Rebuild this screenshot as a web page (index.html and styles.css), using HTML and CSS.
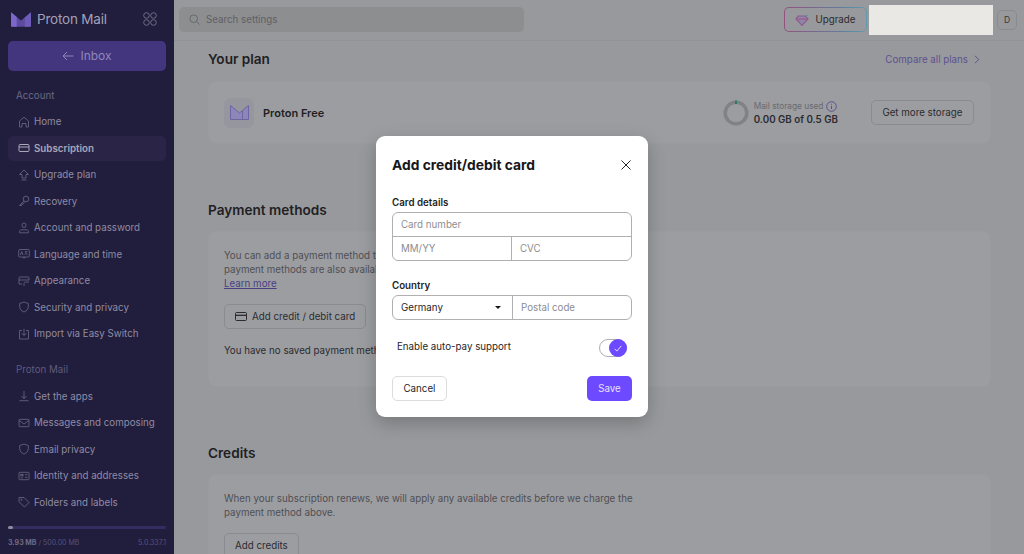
FILE: index.html
```html
<!DOCTYPE html>
<html lang="en">
<head>
  <meta charset="UTF-8">
  <title>Proton Mail settings</title>
  <link rel="stylesheet" href="styles.css">
</head>
<body>
<div class="app">
  <aside class="sidebar">
    <div class="brand">
      <svg class="brand-logo" width="20" height="15" viewBox="0 0 21 15"><path d="M0 0l10.5 8.5L21 0v15H0z" fill="#5c4b9e"/><path d="M0 0l6 5v10H1.5A1.5 1.5 0 0 1 0 13.500z" fill="#7d68c9"/><path d="M21 0l-6.500 5.300V15h5A1.500 1.500 0 0 0 21 13.500z" fill="#6f5bb8"/></svg>
      <span class="brand-name">Proton Mail</span>
      <svg class="brand-grid" width="14" height="14" viewBox="0 0 14 14" fill="none" stroke="#6f6c86" stroke-width="1"><circle cx="3.500" cy="3.500" r="2.800"/><circle cx="10.500" cy="3.500" r="2.800"/><circle cx="3.500" cy="10.500" r="2.800"/><circle cx="10.500" cy="10.500" r="2.800"/></svg>
    </div>
    <div class="inbox-btn">
      <svg width="12" height="10" viewBox="0 0 12 10" fill="none" stroke="#8f86bb" stroke-width="1"><path d="M11.500 5H1M5 1L1 5l4 4"/></svg>
      <span>Inbox</span>
    </div>

    <div class="nav-label nav-label-first">Account</div>
    <ul class="nav">
      <li><svg class="ico" viewBox="0 0 12 12"><path d="M1.500 11V5L6 1.200 10.500 5v6h-2.500V7.500H4V11z"/></svg>Home</li>
      <li class="active"><svg class="ico" viewBox="0 0 12 12"><rect x="1" y="2.500" width="10" height="7" rx="1"/><path d="M1 5h10"/></svg>Subscription</li>
      <li><svg class="ico" viewBox="0 0 12 12"><path d="M6 1l4.500 4.500H8V9H4V5.500H1.500zM3.500 11h5"/></svg>Upgrade plan</li>
      <li><svg class="ico" viewBox="0 0 12 12"><circle cx="8" cy="4" r="2.800"/><path d="M6 6L1.500 10.500H3.500L4 9h1.200L6.500 7.500"/></svg>Recovery</li>
      <li><svg class="ico" viewBox="0 0 12 12"><rect x="4" y="1" width="4" height="4.500" rx="2"/><path d="M1.500 10.800V9.500c0-1 1-1.700 2-1.700h5c1 0 2 .7 2 1.700v1.300z"/></svg>Account and password</li>
      <li><svg class="ico ico-wide" viewBox="0 0 12 12"><rect x=".7" y="1.500" width="10.600" height="7.500" rx="1"/><path d="M2.500 7l1.200-3.500L5 7M6.800 3.700h2.700M8 3.700c0 1.500-.5 2.500-1.300 3M8 5.500l1.500 1.300M5 9l1 1.500L7 9"/></svg>Language and time</li>
      <li><svg class="ico" viewBox="0 0 12 12"><path d="M1 9V3a1 1 0 0 1 1-1h8a1 1 0 0 1 1 1v2M1 5h10M1 9h3M6 11V8.500c0-1 1-1.500 2-1.500h3"/></svg>Appearance</li>
      <li><svg class="ico" viewBox="0 0 12 12"><path d="M6 1l4.300 1.500v3.200c0 2.600-2 4.400-4.300 5.300-2.300-.9-4.300-2.700-4.300-5.300V2.500z"/></svg>Security and privacy</li>
      <li><svg class="ico" viewBox="0 0 12 12"><path d="M4 2.500H1.500v8.500h9V2.500H8M6 .8v6.500M3.800 5.300L6 7.500l2.200-2.200"/></svg>Import via Easy Switch</li>
    </ul>

    <div class="nav-label">Proton Mail</div>
    <ul class="nav">
      <li><svg class="ico" viewBox="0 0 12 12"><path d="M6 1v7.500M3.500 6L6 8.500 8.500 6M1.500 10.700h9"/></svg>Get the apps</li>
      <li><svg class="ico" viewBox="0 0 12 12"><rect x="1" y="2.300" width="10" height="7.400" rx="1"/><path d="M1 3.500L6 7l5-3.500"/></svg>Messages and composing</li>
      <li><svg class="ico" viewBox="0 0 12 12"><path d="M6 1l4.300 1.500v3.200c0 2.600-2 4.400-4.300 5.300-2.300-.9-4.300-2.700-4.300-5.300V2.500z"/></svg>Email privacy</li>
      <li><svg class="ico" viewBox="0 0 12 12"><rect x="1" y="2.300" width="10" height="7.400" rx=".8"/><rect x="2.800" y="4.300" width="2.200" height="1.500"/><path d="M2.800 7.700H5M7 4.700h2.500M7 7.300h2.500"/></svg>Identity and addresses</li>
      <li><svg class="ico" viewBox="0 0 12 12"><path d="M1 1.500h5L11 6.500 6.500 11 1 5.800z"/><circle cx="3.500" cy="3.800" r=".6"/></svg>Folders and labels</li>
    </ul>

    <div class="storage">
      <div class="storage-bar"><div class="storage-fill"></div></div>
      <div class="storage-row">
        <span><b>3.93 MB</b> / 500.00 MB</span>
        <span>5.0.337.1</span>
      </div>
    </div>
  </aside>

  <div class="main">
    <header class="topbar">
      <div class="search">
        <svg width="11" height="11" viewBox="0 0 11 11" fill="none" stroke="#68686c" stroke-width="1"><circle cx="4.700" cy="4.700" r="3.800"/><path d="M7.500 7.500l3 3"/></svg>
        <span>Search settings</span>
      </div>
      <div class="upgrade-wrap">
        <div class="upgrade">
          <svg width="14" height="12" viewBox="0 0 14 12" fill="none" stroke-width="1.200"><path d="M3 2h7.500L13 5l-6 6.300L1 5z" stroke="#8c5a8e" fill="#8d86aa"/><path d="M1 5h12" stroke="#a15a84"/><path d="M11.500 .3v2.500M10.300 1.500h2.500" stroke="#5f93a3" stroke-width=".8"/></svg>
          <span>Upgrade</span>
        </div>
      </div>
      <div class="redacted"></div>
      <div class="avatar">D</div>
    </header>

    <div class="content">
      <section class="plan-section">
        <div class="section-head">
          <h2>Your plan</h2>
          <a class="compare">Compare all plans
            <svg width="6" height="9" viewBox="0 0 6 9" fill="none" stroke="#5c5290" stroke-width="1"><path d="M1 .8l3.700 3.700L1 8.200"/></svg>
          </a>
        </div>
        <div class="card plan-card">
          <div class="plan-icon">
            <svg width="19" height="15" viewBox="0 0 19 15"><path d="M.5.500l6 5 3 2.500 3-2.500 6-5V14.500H.5z" fill="#8d86b8" stroke="#6e64a2"/><path d="M12.500 5.500v9" stroke="#6e64a2"/></svg>
          </div>
          <div class="plan-name">Proton Free</div>
          <div class="plan-storage">
            <svg class="donut" width="26" height="26" viewBox="0 0 26 26" fill="none" stroke-width="3.500"><circle cx="13" cy="13" r="10.800" stroke="#818286"/><path d="M12 2.300h2" stroke="#2e7a63"/></svg>
            <div>
              <div class="storage-title">Mail storage used
                <svg width="11" height="11" viewBox="0 0 11 11" fill="none" stroke="#5c5290" stroke-width="1"><circle cx="5.500" cy="5.500" r="4.800"/><path d="M5.500 4.800v3.200M5.500 2.700v1"/></svg>
              </div>
              <div class="storage-value">0.00 GB of 0.5 GB</div>
            </div>
          </div>
          <div class="btn-outline btn-storage">Get more storage</div>
        </div>
      </section>

      <section class="payment-section">
        <h2>Payment methods</h2>
        <div class="card text-card payment-card">
          <p class="muted">You can add a payment method to have your subscription renewed automatically. Other<br>payment methods are also available.<br><a class="learn">Learn more</a></p>
          <div class="btn-outline btn-card">
            <svg width="12" height="9" viewBox="0 0 12 9" fill="none" stroke="#2b2b30" stroke-width="1"><rect x=".5" y=".5" width="11" height="8" rx="1"/><path d="M.5 3.300h11" stroke-width="1.300"/></svg>
            Add credit / debit card
          </div>
          <p class="no-saved">You have no saved payment methods.</p>
        </div>
      </section>

      <section class="credits-section">
        <h2>Credits</h2>
        <div class="card text-card">
          <p class="muted">When your subscription renews, we will apply any available credits before we charge the<br>payment method above.</p>
          <div class="btn-outline btn-credits">Add credits</div>
        </div>
      </section>
    </div>
  </div>
</div>

<div class="modal-layer">
  <div class="modal">
    <div class="modal-head">
      <h1>Add credit/debit card</h1>
      <svg width="10" height="10" viewBox="0 0 10 10" fill="none" stroke="#26262b" stroke-width="1"><path d="M.5.500l9 9M9.500.500l-9 9"/></svg>
    </div>
    <label class="field-label">Card details</label>
    <div class="field-box">
      <div class="field-cell">Card number</div>
      <div class="field-split">
        <div class="field-cell">MM/YY</div>
        <div class="field-cell">CVC</div>
      </div>
    </div>
    <label class="field-label">Country</label>
    <div class="field-box country-box">
      <div class="field-cell country-select">
        <span>Germany</span>
        <span class="caret"></span>
      </div>
      <div class="field-cell">Postal code</div>
    </div>
    <div class="autopay">
      <span class="autopay-text">Enable auto-pay support</span>
      <div class="toggle">
        <div class="toggle-knob">
          <svg width="8" height="7" viewBox="0 0 8 7" fill="none" stroke="#fff" stroke-width=".8"><path d="M.7 3.800l2.200 2.300L7.300.8"/></svg>
        </div>
      </div>
    </div>
    <div class="modal-foot">
      <div class="btn-cancel">Cancel</div>
      <div class="btn-save">Save</div>
    </div>
  </div>
</div>
</body>
</html>
```

FILE: styles.css
```css
*{
    margin: 0;
    padding: 0;
    box-sizing: border-box;
    font-family: Inter, "Liberation Sans", sans-serif;
}
html, body{
    width: 1024px;
    height: 554px;
    overflow: hidden;
}
body{
    background-color: #98999c;
    color: #26262b;
    font-size: 9.75px;
}
.app{
    display: flex;
    height: 554px;
}

/* sidebar */
.sidebar{
    width: 174px;
    flex-shrink: 0;
    background-color: #211d3d;
    color: #8f8ca3;
    padding: 0 8px;
    display: flex;
    flex-direction: column;
}
.brand{
    display: flex;
    align-items: center;
    height: 41px;
    padding: 0 9px 3px 3px;
}
.brand-name{
    margin-left: 6px;
    font-size: 13.500px;
    font-weight: 400;
    color: #a3a1b5;
    letter-spacing: -0.2px;
}
.brand-grid{
    margin-left: auto;
}
.inbox-btn{
    height: 30px;
    padding-bottom: 1px;
    border-radius: 5px;
    background-color: #43367f;
    color: #8f86bb;
    font-size: 12px;
    display: flex;
    align-items: center;
    justify-content: center;
    gap: 6px;
}
.nav-label{
    padding-left: 8px;
    height: 26px;
    line-height: 24px;
    margin-top: 10px;
    color: #5f5b7c;
}
.nav-label-first{
    height: 25px;
    margin-top: 13px;
    color: #6c6986;
}
.nav{
    list-style: none;
}
.nav li{
    height: 25px;
    margin-bottom: 1.500px;
    padding-left: 10px;
    border-radius: 5px;
    display: flex;
    align-items: center;
    gap: 4px;
    white-space: nowrap;
}
.nav li.active{
    background-color: #2a2547;
    color: #a9a7b9;
    font-weight: 600;
}
.ico{
    width: 12px;
    height: 12px;
    fill: none;
    stroke: #6c6986;
    stroke-width: 0.8;
    flex-shrink: 0;
}
.nav li.active .ico{
    stroke: #a9a7b9;
    stroke-width: 1;
}
.storage{
    margin-top: auto;
    padding-bottom: 7px;
}
.storage-bar{
    height: 3px;
    border-radius: 2px;
    background-color: #352c61;
}
.storage-fill{
    width: 5px;
    height: 3px;
    border-radius: 2px;
    background-color: #8f8ca3;
}
.storage-row{
    display: flex;
    justify-content: space-between;
    margin-top: 9px;
    font-size: 7px;
    color: #56527a;
}
.storage-row b{
    color: #6f6c86;
}

/* top bar */
.main{
    flex: 1;
    min-width: 0;
    display: flex;
    flex-direction: column;
}
.topbar{
    height: 41px;
    flex-shrink: 0;
    border-bottom: 1px solid #919296;
    display: flex;
    align-items: center;
    padding: 0 7px 1px 5px;
}
.search{
    width: 345px;
    height: 25px;
    border-radius: 5px;
    background-color: #8d8e90;
    color: #606065;
    display: flex;
    align-items: center;
    gap: 6px;
    padding-left: 10px;
}
.upgrade-wrap{
    margin-left: auto;
    padding: 1px;
    border-radius: 5px;
    background: linear-gradient(90deg, #93517f, #5f7f9c 70%, #5f9bad);
}
.upgrade{
    width: 81px;
    height: 23px;
    border-radius: 4px;
    background-color: #98999c;
    display: flex;
    align-items: center;
    justify-content: center;
    gap: 6px;
    color: #2b2b30;
}
.redacted{
    width: 124px;
    height: 30px;
    margin: 0 4px 0 2px;
    background-color: #eae8e5;
}
.avatar{
    width: 20px;
    height: 20px;
    border: 1px solid #8a8b8f;
    border-radius: 5px;
    display: flex;
    align-items: center;
    justify-content: center;
    font-size: 8.500px;
    color: #38383d;
}

/* page content */
.content{
    flex: 1;
    overflow: hidden;
    padding: 10px 33px 0 34px;
}
h2{
    font-size: 13.600px;
    font-weight: 600;
    line-height: 17px;
    color: #1f1f24;
}
.section-head{
    display: flex;
    justify-content: space-between;
    align-items: center;
    padding-right: 11px;
}
.compare{
    display: flex;
    align-items: center;
    gap: 6px;
    color: #5c5290;
}
.card{
    background-color: #9c9da0;
    border: 1px solid #9a9b9e;
    border-radius: 8px;
}
.plan-card{
    margin-top: 13px;
    height: 63px;
    padding: 0 16px 0 15px;
    display: flex;
    align-items: center;
}
.plan-icon{
    width: 30px;
    height: 30px;
    border-radius: 7px;
    background-color: #95969e;
    display: flex;
    align-items: center;
    justify-content: center;
    margin-right: 9px;
}
.plan-name{
    font-size: 11px;
    font-weight: 600;
    color: #1f1f24;
}
.plan-storage{
    margin-left: auto;
    display: flex;
    align-items: center;
    gap: 5px;
    margin-right: 33px;
}
.storage-title{
    display: flex;
    align-items: center;
    gap: 3px;
    font-size: 8.300px;
    color: #6a6a6f;
}
.storage-value{
    font-size: 9.750px;
    font-weight: 600;
    margin-top: 2px;
    color: #2b2b30;
}
.btn-outline{
    height: 25px;
    padding: 0 11px;
    border: 1px solid #8a8b8f;
    border-radius: 5px;
    display: inline-flex;
    align-items: center;
    color: #2b2b30;
}
.btn-storage{
    padding: 0 10.500px;
}
.payment-section{
    margin-top: 58px;
}
.payment-card{
    margin-top: 12px;
    height: 156px;
}
.text-card{
    padding: 17px 15px;
}
.muted{
    line-height: 14px;
    color: #4f4f55;
}
.learn{
    color: #493f85;
    text-decoration: underline;
}
.btn-card{
    margin-top: 13px;
    padding: 0 10px;
    gap: 5px;
}
.no-saved{
    margin-top: 16px;
    color: #2b2b30;
}
.credits-section{
    margin-top: 58px;
}
.credits-section .card{
    margin-top: 12px;
    height: 100px;
}
.btn-credits{
    margin-top: 13px;
    padding: 0 10px;
}

/* dialog */
.modal-layer{
    position: absolute;
    top: 0;
    left: 0;
    width: 1024px;
    height: 554px;
    padding-bottom: 1px;
    display: flex;
    align-items: center;
    justify-content: center;
}
.modal{
    width: 272px;
    height: 281px;
    background-color: #fff;
    border-radius: 9px;
    padding: 16px;
    box-shadow: 0 6px 18px rgba(0, 0, 0, 0.22);
}
.modal-head{
    display: flex;
    justify-content: space-between;
    align-items: center;
    height: 26px;
    padding-right: 1px;
}
h1{
    font-size: 13.800px;
    font-weight: 700;
    color: #17171a;
}
.field-label{
    display: block;
    margin-top: 17px;
    height: 17px;
    line-height: 16px;
    font-weight: 600;
    color: #1f1f24;
}
.field-box{
    border: 1px solid #b0b0b3;
    border-radius: 6px;
    overflow: hidden;
    color: #8d8d91;
}
.field-cell{
    height: 23px;
    display: flex;
    align-items: center;
    padding-left: 8px;
}
.field-split{
    display: grid;
    grid-template-columns: 118px 1fr;
    border-top: 1px solid #b0b0b3;
}
.field-split .field-cell + .field-cell,
.country-box .field-cell + .field-cell{
    border-left: 1px solid #b0b0b3;
}
.country-box{
    display: grid;
    grid-template-columns: 119px 1fr;
}
.country-select{
    color: #26262b;
    justify-content: space-between;
    padding-right: 11px;
}
.caret{
    width: 0;
    height: 0;
    border-left: 3.500px solid transparent;
    border-right: 3.500px solid transparent;
    border-top: 3.500px solid #17171a;
}
.autopay{
    display: flex;
    justify-content: space-between;
    align-items: flex-start;
    margin-top: 19px;
    padding: 0 5px;
    color: #26262b;
}
.autopay-text{
    margin-top: 2px;
}
.toggle{
    width: 28px;
    height: 18px;
    border: 1px solid #b0b0b3;
    border-radius: 9px;
    position: relative;
}
.toggle-knob{
    position: absolute;
    top: -1px;
    right: -1px;
    width: 18px;
    height: 18px;
    border-radius: 9px;
    background-color: #6d4aff;
    display: flex;
    align-items: center;
    justify-content: center;
}
.modal-foot{
    display: flex;
    justify-content: space-between;
    margin-top: 19px;
}
.btn-cancel, .btn-save{
    height: 25px;
    border-radius: 5px;
    display: flex;
    align-items: center;
    justify-content: center;
}
.btn-cancel{
    width: 55px;
    border: 1px solid #dcdcde;
    color: #26262b;
}
.btn-save{
    width: 45px;
    background-color: #6d4aff;
    color: #e6e0ff;
}
```
